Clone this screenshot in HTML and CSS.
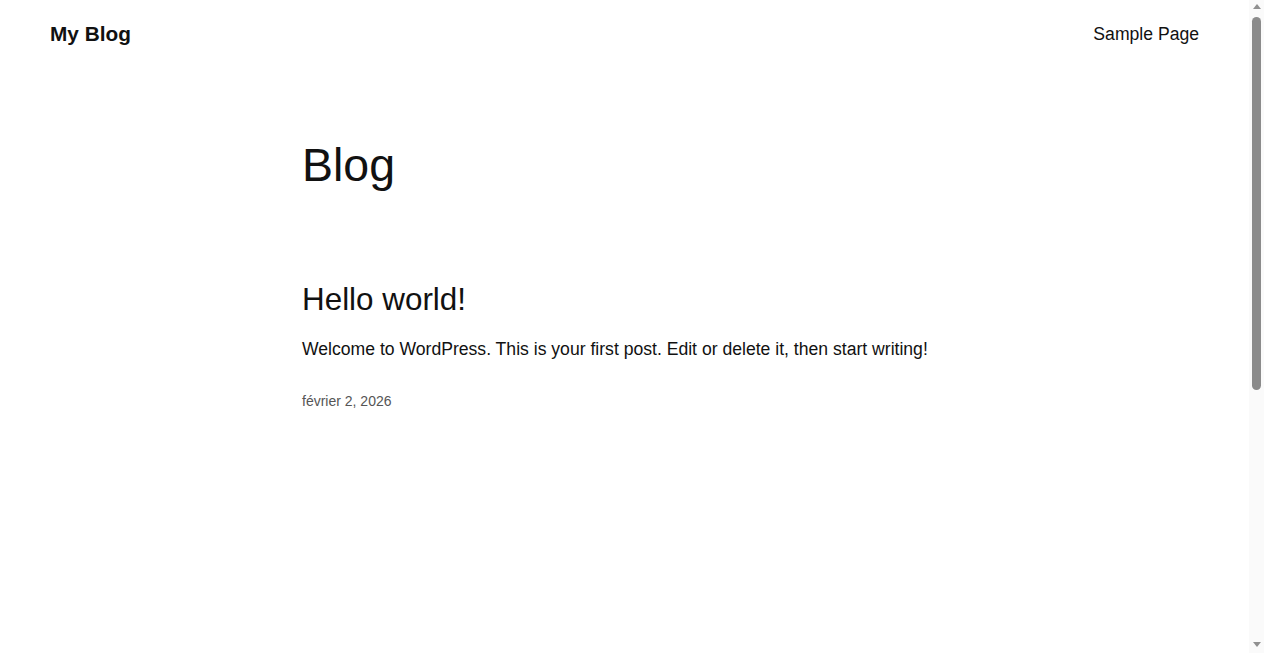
FILE: index.html
```html
<!DOCTYPE html>
<html lang="fr">
<head>
<meta charset="utf-8">
<title>My Blog</title>
<link rel="stylesheet" href="styles.css">
</head>
<body>
<header class="site-header">
  <a class="site-title" href="#">My Blog</a>
  <nav class="site-nav"><a href="#">Sample Page</a></nav>
</header>
<main class="site-main">
  <h1 class="page-title">Blog</h1>
  <article class="post">
    <h2 class="post-title"><a href="#">Hello world!</a></h2>
    <p class="post-excerpt">Welcome to WordPress. This is your first post. Edit or delete it, then start writing!</p>
    <div class="post-date">février 2, 2026</div>
  </article>
</main>
<footer class="site-footer"></footer>
<div class="scrollbar" aria-hidden="true">
  <div class="sb-button"><span class="sb-arrow sb-up"></span></div>
  <div class="sb-track"><div class="sb-thumb"></div></div>
  <div class="sb-button"><span class="sb-arrow sb-down"></span></div>
</div>
</body>
</html>
```

FILE: styles.css
```css
html, body {
  padding: 0;
  background: #ffffff;
}
html {
  margin: 0;
}
body {
  margin: 0 15px 0 0;
  font-family: "Liberation Sans", Arial, sans-serif;
  color: #111111;
}
a {
  color: inherit;
  text-decoration: none;
}
.site-header {
  display: flex;
  justify-content: space-between;
  align-items: center;
  padding: 19px 50px 20px;
}
.site-title {
  font-size: 20.8px;
  font-weight: 700;
  line-height: 27px;
}
.site-nav {
  font-size: 17.6px;
  line-height: 26.4px;
  padding-top: 2px;
}
.site-main {
  width: 645px;
  margin: 0 auto;
  padding-top: 71px;
  min-height: 886px;
}
.page-title {
  margin: 0;
  font-size: 46.5px;
  font-weight: 400;
  line-height: 1.2;
}
.post {
  margin-top: 87px;
}
.post-title {
  margin: 0;
  font-size: 31.4px;
  font-weight: 400;
  line-height: 1.2;
}
.post-excerpt {
  margin: 17px 0 0;
  font-size: 17.6px;
  line-height: 1.5;
}
.post-date {
  margin-top: 28.5px;
  font-size: 14px;
  line-height: 1.5;
  color: #555555;
}
.site-footer {
  height: 69px;
}

/* decorative classic scrollbar drawn over the right edge */
.scrollbar {
  position: fixed;
  top: 0;
  right: 0;
  width: 15px;
  height: 100vh;
  background: #fafafa;
  display: flex;
  flex-direction: column;
}
.sb-button {
  height: 16px;
  flex: 0 0 16px;
  display: flex;
  justify-content: center;
}
.sb-arrow {
  width: 0;
  height: 0;
  border-left: 4px solid transparent;
  border-right: 4px solid transparent;
}
.sb-up {
  margin-top: 4px;
  border-bottom: 5px solid #909090;
}
.sb-down {
  margin-top: 5px;
  border-top: 5px solid #909090;
}
.sb-track {
  flex: 1;
  padding: 1px 3px 0;
}
.sb-thumb {
  height: 373px;
  background: #8b8b8b;
  border-radius: 5px;
}
```
